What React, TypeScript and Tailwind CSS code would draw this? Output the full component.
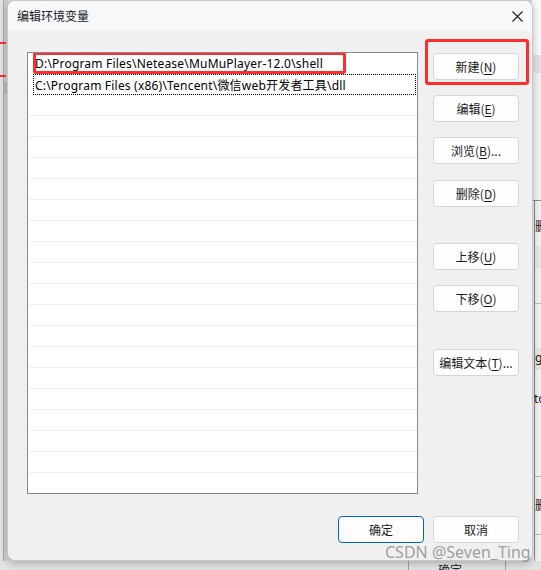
import React from "react";

const FONT = '"Noto Sans", "Noto Sans CJK SC", sans-serif';
const CJK = '"Noto Sans CJK SC", "Noto Sans", sans-serif';

function Btn({
  label,
  k,
  tail,
  className = "",
  primary = false,
}: {
  label: string;
  k?: string;
  tail?: string;
  className?: string;
  primary?: boolean;
}) {
  return (
    <div
      className={`flex h-[27px] w-[86px] items-center justify-center rounded-[4px] border bg-[#fdfdfd] text-[12px] text-[#1a1a1a] ${
        primary ? "border-[#0067c0]" : "border-[#d5d5d5]"
      } ${className}`}
      style={{ fontFamily: CJK }}
    >
      <span>{label}</span>
      {k !== undefined && (
        <span>
          (<span className="underline underline-offset-2">{k}</span>)
        </span>
      )}
      {tail && <span>{tail}</span>}
    </div>
  );
}

export default function App() {
  const rows = Array.from({ length: 22 });
  return (
    <div className="relative h-[570px] w-[541px] overflow-hidden bg-[#dcdcdc]" style={{ fontFamily: FONT }}>
      {/* background desktop: left strip */}
      <div className="absolute left-0 top-0 h-full w-[3px] bg-[#e4e4e4]" />
      <div className="absolute left-[3px] top-0 h-full w-[1px] bg-[#a8a8a8]" />
      <div className="absolute left-[4px] top-0 h-full w-[4px] bg-[#d2d2d2]" />
      <div className="absolute left-0 top-[42px] h-[2px] w-[6px] bg-[#ff3030]" />
      <div className="absolute left-0 top-[75px] h-[2px] w-[6px] bg-[#ff3030]" />
      <div className="absolute left-[4px] top-[82px] h-[12px] w-[4px] bg-[#bdbdbd]" />

      {/* background desktop: right strip */}
      <div className="absolute right-0 top-0 h-full w-[9px] bg-[#f3f3f3]" />
      <div className="absolute right-0 top-0 h-[55px] w-[9px] bg-[#fafafa]" />
      <div className="absolute right-0 top-[55px] h-[18px] w-[9px] bg-[#e3e3e3]" />
      <div className="absolute right-0 top-[200px] h-[1px] w-[9px] bg-[#8c8c8c]" />
      <div className="absolute left-[534px] top-[200px] h-[370px] w-[1px] bg-[#8c8c8c]" />
      <div className="absolute left-[535px] top-[218px] h-[16px] w-[6px] overflow-hidden text-[12px] leading-[16px] text-[#222]" style={{ fontFamily: CJK }}>
        删
      </div>
      <div className="absolute left-[535px] top-[246px] h-[22px] w-[6px] bg-[#e8e8e8]" />
      <div className="absolute left-[535px] top-[303px] h-[1px] w-[6px] bg-[#bbbbbb]" />
      <div className="absolute left-[535px] top-[348px] h-[22px] w-[6px] overflow-hidden bg-[#e6e6e6] text-[12px] leading-[20px] text-[#222]">
        g
      </div>
      <div className="absolute left-[534px] top-[390px] h-[18px] w-[7px] overflow-hidden text-[12px] leading-[18px] text-[#222]">
        to
      </div>
      <div className="absolute left-[535px] top-[476px] h-[1px] w-[6px] bg-[#bbbbbb]" />
      <div className="absolute left-[535px] top-[497px] h-[16px] w-[6px] overflow-hidden text-[12px] leading-[16px] text-[#222]" style={{ fontFamily: CJK }}>
        删
      </div>
      <div className="absolute left-[535px] top-[534px] h-[1px] w-[6px] bg-[#bbbbbb]" />
      <div className="absolute left-0 top-[561px] h-[9px] w-full bg-[#e2e2e2]" />
      <div className="absolute left-[408px] top-[561px] h-[9px] w-[1px] bg-[#a0a0a0]" />
      <div className="absolute left-[505px] top-[561px] h-[9px] w-[1px] bg-[#a0a0a0]" />
      <div className="absolute left-[438px] top-[561px] h-[9px] w-[40px] overflow-hidden text-[12px] leading-[18px] text-[#222]" style={{ fontFamily: CJK }}>
        确定
      </div>

      {/* dialog window */}
      <div className="absolute left-[7px] top-0 flex h-[561px] w-[526px] flex-col overflow-hidden rounded-[8px] border border-[#c9c9c9] bg-[#f0f0f0] shadow-[0_2px_8px_rgba(0,0,0,0.25)]">
        {/* title bar */}
        <div className="flex h-[30px] shrink-0 items-center justify-between bg-[#f7f8fa] pl-[9px] pr-[9px]">
          <span className="text-[12px] text-[#1a1a1a]" style={{ fontFamily: CJK }}>
            编辑环境变量
          </span>
          <svg width="11" height="11" viewBox="0 0 11 11">
            <path d="M0.5 0.5 L10.5 10.5 M10.5 0.5 L0.5 10.5" stroke="#1a1a1a" strokeWidth="1.1" />
          </svg>
        </div>

        {/* body */}
        <div className="flex flex-1 flex-col">
          <div className="flex pl-[19px] pt-[21px]">
            {/* list box */}
            <div className="relative h-[442px] w-[391px] overflow-hidden border border-[#868690] bg-white">
              {rows.map((_, i) => (
                <div key={i} className="relative h-[21px] border-b border-[#f0f0f0]">
                  {i === 0 && (
                    <div className="pl-[7px] text-[12px] leading-[21px] tracking-[0.2px] text-[#000]" style={{ fontFamily: FONT }}>
                      D:\Program Files\Netease\MuMuPlayer-12.0\shell
                    </div>
                  )}
                  {i === 1 && (
                    <div
                      className="ml-[5px] mr-[1px] h-[21px] border border-dotted border-[#000] pl-[1px] text-[12px] leading-[19px] tracking-[0.2px] text-[#000]"
                      style={{ fontFamily: FONT }}
                    >
                      C:\Program Files (x86)\Tencent\<span style={{ fontFamily: CJK }}>微信</span>web
                      <span style={{ fontFamily: CJK }}>开发者工具</span>\dll
                    </div>
                  )}
                </div>
              ))}
              {/* red annotation */}
              <div className="absolute left-[5px] top-[-1px] h-[22px] w-[313px] rounded-[3px] border-[3px] border-[#ff2d2d]" />
            </div>

            {/* buttons column */}
            <div className="relative ml-[15px] flex flex-col">
              <div className="absolute left-[-8px] top-[-13px] h-[46px] w-[104px] rounded-[3px] border-[3px] border-[#ff2d2d]" />
              <Btn label="新建" k="N" className="mt-[1px]" />
              <Btn label="编辑" k="E" className="mt-[15px]" />
              <Btn label="浏览" k="B" tail="..." className="mt-[15px]" />
              <Btn label="删除" k="D" className="mt-[16px]" />
              <Btn label="上移" k="U" className="mt-[36px]" />
              <Btn label="下移" k="O" className="mt-[15px]" />
              <Btn label="编辑文本" k="T" tail="..." className="mt-[37px]" />
            </div>
          </div>

          {/* bottom buttons */}
          <div className="mt-[22px] flex justify-end gap-[9px] pr-[13px]">
            <Btn label="确定" primary />
            <Btn label="取消" />
          </div>
        </div>
      </div>

      {/* watermark */}
      <div
        className="absolute left-[385px] top-[542px] text-[16px] leading-[20px] text-[rgba(120,120,120,0.7)]"
        style={{ fontFamily: '"Noto Sans", sans-serif' }}
      >
        CSDN @Seven_Ting
      </div>
    </div>
  );
}
